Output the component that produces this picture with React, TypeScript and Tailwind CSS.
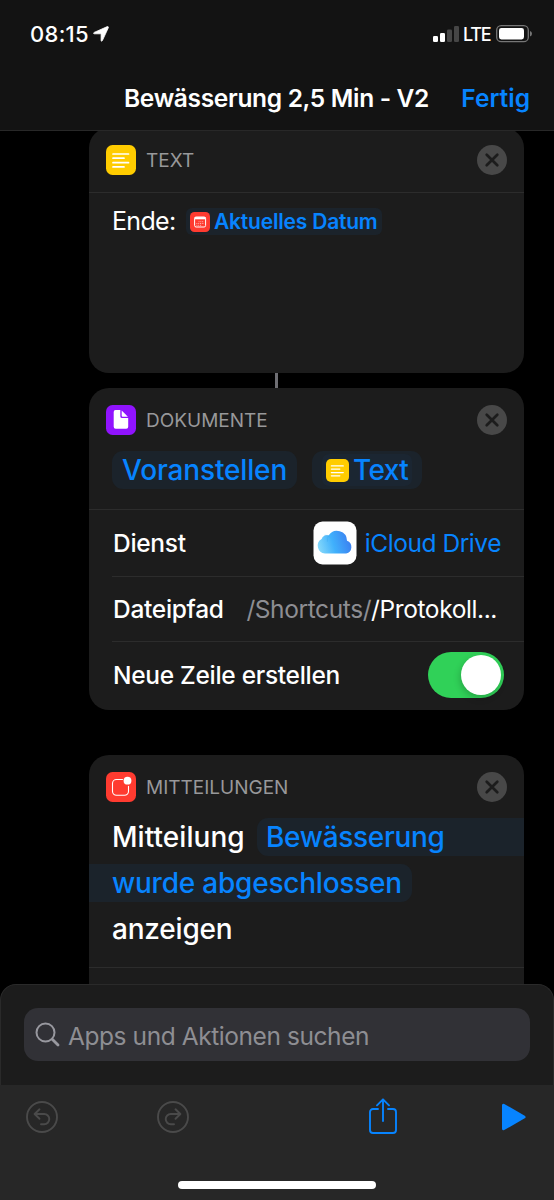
import type { ReactNode } from 'react';

function TextIcon({ size }: { size: number }) {
    return (
        <svg width={size} height={size} viewBox="0 0 30 30" className="shrink-0">
            <rect width="30" height="30" rx="6.5" fill="#ffcc00" />
            <path d="M7 9h15.500M7 13.200h11M7 17.700h15.500M7 21.900h11" stroke="#fff" strokeWidth="1.700" strokeLinecap="round" />
        </svg>
    );
}

function DocumentIcon() {
    return (
        <svg width="30" height="30" viewBox="0 0 30 30" className="shrink-0">
            <rect width="30" height="30" rx="6.500" fill="#9013fe" />
            <path d="M9.500 5h4.800v6.200q0 1.900 1.900 1.900h6V21.800q0 2-2 2H9.700q-2 0-2-2V7q0-2 1.800-2z" fill="#fff" />
            <path d="M15.700 5.400v5.300q0 1 1 1h5.200z" fill="#fff" />
        </svg>
    );
}

function NotificationIcon() {
    return (
        <svg width="30" height="30" viewBox="0 0 30 30" className="shrink-0">
            <rect width="30" height="30" rx="6.500" fill="#ff3b30" />
            <path d="M16.500 7.500H10.500a4 4 0 0 0-4 4v7.800a4 4 0 0 0 4 4h8a4 4 0 0 0 4-4V14.300" fill="none" stroke="#fff" strokeWidth="1.100" strokeLinecap="round" />
            <circle cx="21.500" cy="8.700" r="3.900" fill="#fff" />
        </svg>
    );
}

function CalendarIcon() {
    return (
        <svg width="20" height="20" viewBox="0 0 20 20" className="shrink-0">
            <rect width="20" height="20" rx="4.500" fill="#ff3b30" />
            <rect x="4.600" y="5" width="11" height="10" rx="1.500" fill="none" stroke="#fff" strokeWidth="1" />
            <path d="M4.600 6.200h11" stroke="#fff" strokeWidth="2.200" />
            <path d="M8.500 9.700h5.500M6.400 11.500h7.600M6.400 13.300h5.500" stroke="#ffb3ae" strokeWidth=".9" strokeDasharray="1 .8" />
        </svg>
    );
}

function CloudIcon() {
    return (
        <svg width="44" height="44" viewBox="0 0 44 44" className="shrink-0">
            <defs>
                <linearGradient id="cloud" x1="0" y1="0.600" x2="1" y2="0.400">
                    <stop offset="0" stopColor="#83d7fa" />
                    <stop offset="0.450" stopColor="#40b0fc" />
                    <stop offset="1" stopColor="#3b7df0" />
                </linearGradient>
            </defs>
            <rect x=".5" y=".5" width="43" height="43" rx="9" fill="#fff" />
            <path d="M12 32.500a7.800 7.800 0 0 1-3.400-14.500 5.700 5.700 0 0 1 7-3.600A10 10 0 0 1 34 19.700a6.700 6.700 0 0 1-.8 12.800z" fill="url(#cloud)" />
            <path d="M15.600 14.400a10 10 0 0 0-1.200 6.300M11.500 14.300a5.700 5.700 0 0 1 6 2.500" fill="none" stroke="#3aa9ef" strokeWidth=".7" opacity=".6" />
        </svg>
    );
}

function CloseButton() {
    return (
        <button type="button" aria-label="Entfernen" className="ml-auto shrink-0">
            <svg width="30" height="30" viewBox="0 0 30 30">
                <circle cx="15" cy="15" r="15" fill="#484848" />
                <path d="M9.700 9.700l10.600 10.600M20.300 9.700L9.700 20.300" stroke="#1c1c1c" strokeWidth="2.700" strokeLinecap="round" />
            </svg>
        </button>
    );
}

function CardHeader({ icon, children }: { icon: ReactNode; children: ReactNode }) {
    return (
        <div className="flex h-[47px] items-start pl-[17px] pr-[17px] pt-[17px]">
            {icon}
            <span className="ml-[10px] text-[19px] leading-[31px] text-[#98989a]">{children}</span>
            <CloseButton />
        </div>
    );
}

function StatusBar() {
    return (
        <div className="flex h-[66px] items-center pl-[30px] pr-[22px] pt-[2px]">
            <span className="text-[22px] font-medium tracking-[0.3px]">08:15</span>
            <svg width="16" height="16" viewBox="0 0 16 16" className="ml-[4px]">
                <path d="M14.300.6a.8.800 0 0 1 1.100 1L9.400 14.600c-.4.900-1.300.8-1.300-.2V8.300c0-.3-.2-.5-.5-.5H1.400c-1 0-1.100-1-.2-1.400z" fill="#fff" stroke="#fff" strokeWidth=".8" />
            </svg>
            <svg width="26" height="17" viewBox="0 0 26 17" className="ml-auto">
                <rect x="0" y="10" width="5" height="6" rx="1.300" fill="#fff" />
                <rect x="7" y="7" width="5" height="9" rx="1.300" fill="#fff" />
                <rect x="14" y="3.500" width="5" height="12.500" rx="1.300" fill="#464646" />
                <rect x="21" y="0" width="5" height="16" rx="1.300" fill="#464646" />
            </svg>
            <span className="ml-[4px] w-[28px] text-[18px] font-medium tracking-[-1.200px]">LTE</span>
            <svg width="36" height="18" viewBox="0 0 36 18" className="ml-[5px] shrink-0">
                <rect x=".7" y=".7" width="31.600" height="16" rx="4.500" fill="none" stroke="#767676" strokeWidth="1.300" />
                <rect x="3" y="3" width="25" height="11.500" rx="2.400" fill="#fff" />
                <path d="M34 6q2 .7 2 2.700T34 11.500z" fill="#767676" />
            </svg>
        </div>
    );
}

function TextCard() {
    return (
        <section className="-mt-[3px] h-[245px] rounded-[20px] bg-[#1c1c1c]">
            <CardHeader icon={<TextIcon size={30} />}>TEXT</CardHeader>
            <div className="mt-[17px] flex items-center border-t border-[#2c2c2c] pl-[23px] pt-[15px]">
                <span className="-mt-[2px] w-[64px] text-[25px] leading-[28px] tracking-[-0.700px]">Ende:</span>
                <span className="ml-[10px] flex h-[27px] items-center rounded-[6px] bg-[#1b232b] px-[4px]">
                    <CalendarIcon />
                    <span className="ml-[4px] text-[21px] font-semibold tracking-[-0.2px] text-[#0784ff]">Aktuelles Datum</span>
                </span>
            </div>
        </section>
    );
}

function DocumentCard() {
    return (
        <section className="h-[322px] rounded-[20px] bg-[#1c1c1c]">
            <CardHeader icon={<DocumentIcon />}>DOKUMENTE</CardHeader>
            <div className="mt-[16px] flex pb-[20px] pl-[23px] text-[28px] leading-[38px] text-[#0784ff]">
                <span className="w-[185px] rounded-[11px] bg-[#1b232b] pl-[10px] font-medium tracking-[-0.15px]">Voranstellen</span>
                <span className="ml-[15px] rounded-[11px] bg-[#1b232b] px-[10px] py-[3px]">
                    <span className="flex h-[32px] w-[90px] items-center rounded-[7px] bg-[#1b2632] pl-[4px]">
                        <TextIcon size={23} />
                        <span className="ml-[4px] font-medium tracking-[-0.6px]">Text</span>
                    </span>
                </span>
            </div>
            <div className="border-t border-[#2c2c2c] pl-[23px] text-[24.500px] font-medium">
                <div className="flex h-[66px] items-center">
                    <span className="pl-px tracking-[-0.3px]">Dienst</span>
                    <span className="ml-auto flex items-center pr-[23px] font-normal text-[#0784ff]">
                        <CloudIcon />
                        <span className="ml-[8px] tracking-[-0.45px]">iCloud Drive</span>
                    </span>
                </div>
                <div className="flex h-[65px] items-center border-t border-[#2c2c2c]">
                    <span className="pl-px tracking-[-0.300px]">Dateipfad</span>
                    <span className="ml-auto pr-[27px] font-normal whitespace-nowrap">
                        <span className="tracking-[-0.4px] text-[#8e8e93]">/Shortcuts/</span>
                        <span className="tracking-[-0.4px]">/Protokoll...</span>
                    </span>
                </div>
                <div className="flex h-[67px] items-center border-t border-[#2c2c2c] pr-[20px]">
                    <span className="pl-px tracking-[-0.3px]">Neue Zeile erstellen</span>
                    <span className="ml-auto flex h-[46px] w-[76px] items-center justify-end rounded-full bg-[#30d158] pr-[3px]">
                        <span className="size-[40px] rounded-full bg-white shadow-[-1px_3px_7px_rgba(0,0,0,0.2)]" />
                    </span>
                </div>
            </div>
        </section>
    );
}

function NotificationCard() {
    return (
        <section className="mt-[45px] h-[260px] rounded-t-[20px] bg-[#1c1c1c]">
            <CardHeader icon={<NotificationIcon />}>MITTEILUNGEN</CardHeader>
            <div className="mt-[16px] text-[28px] leading-[38px] font-medium">
                <div className="flex">
                    <span className="w-[168px] pl-[23px] tracking-[0.05px]">Mitteilung</span>
                    <span className="grow rounded-l-[11px] bg-[#1b232b] pl-[9px] tracking-[-0.3px] text-[#0784ff]">Bewässerung</span>
                </div>
                <div className="mt-[8px] flex">
                    <span className="w-[323px] rounded-r-[11px] bg-[#1b232b] pl-[23px] tracking-[-0.22px] text-[#0784ff]">wurde abgeschlossen</span>
                </div>
                <div className="mt-[8px] pl-[23px] tracking-[-0.2px]">anzeigen</div>
            </div>
            <div className="mt-[19px] border-t border-[#2c2c2c]" />
        </section>
    );
}

function SearchPanel() {
    return (
        <div className="h-[101px] rounded-t-[16px] border-x border-t border-[#2a2a2a] bg-[#1c1c1c] px-[23px] pt-[23px]">
            <div className="flex h-[53px] items-center rounded-[14px] bg-[#313136] pl-[11px]">
                <svg width="26" height="26" viewBox="0 0 26 26" fill="none" stroke="#98989f" strokeWidth="2" strokeLinecap="round">
                    <circle cx="10.500" cy="10.500" r="9" />
                    <path d="M17.500 17.500l5.500 5.500" strokeWidth="2.800" />
                </svg>
                <span className="ml-[7px] pt-[3px] text-[24.500px] tracking-[-0.43px] text-[#8e8e93]">Apps und Aktionen suchen</span>
            </div>
        </div>
    );
}

function UndoIcon({ className }: { className?: string }) {
    return (
        <svg width="32" height="32" viewBox="0 0 32 32" fill="none" stroke="#4a4a4a" strokeWidth="1.900" strokeLinecap="round" strokeLinejoin="round" className={className}>
            <circle cx="16" cy="16" r="15" />
            <path d="M13.500 8.300L8.600 13l4.900 4.800M9 13h9.200a5.100 5.100 0 0 1 0 10.200H15" />
        </svg>
    );
}

function Toolbar() {
    return (
        <div className="h-[115px] bg-[#272727]">
            <div className="flex h-[64px] items-center pl-[26px] pr-[28px]">
                <UndoIcon />
                <UndoIcon className="ml-[99px] -scale-x-100" />
                <svg width="28" height="36" viewBox="0 0 28 36" fill="none" stroke="#0784ff" strokeWidth="1.900" strokeLinecap="round" strokeLinejoin="round" className="ml-[180px] -mt-[2px]">
                    <path d="M9 11H4a3 3 0 0 0-3 3v18a3 3 0 0 0 3 3h20a3 3 0 0 0 3-3V14a3 3 0 0 0-3-3h-5" />
                    <path d="M14 23V1.500M8 7.300l6-6 6 6" />
                </svg>
                <svg width="25" height="28" viewBox="0 0 25 28" className="ml-auto">
                    <path d="M2.500 2.200v23.600L23 14z" fill="#0784ff" stroke="#0784ff" strokeWidth="3" strokeLinejoin="round" />
                </svg>
            </div>
            <div className="mx-auto mt-[32px] h-[8px] w-[198px] rounded-full bg-white" />
        </div>
    );
}

export default function App() {
    return (
        <div className="flex h-[1200px] w-[554px] flex-col overflow-hidden bg-black font-['Inter','Liberation_Sans',sans-serif] text-white">
            <header className="z-10 h-[131px] shrink-0 border-b border-[#282828] bg-[#131313]">
                <StatusBar />
                <div className="flex items-center pl-[124px] pr-[24px] pt-[14px] text-[24.500px] leading-[36px] font-semibold whitespace-nowrap">
                    <h1 className="tracking-[-0.32px]">Bewässerung 2,5 Min - V2</h1>
                    <button type="button" className="ml-auto text-[#0784ff]">Fertig</button>
                </div>
            </header>
            <main className="h-[853px] shrink-0 pl-[89px] pr-[30px]">
                <TextCard />
                <div className="ml-[186px] h-[15px] w-[3px] bg-[#6e6e73]" />
                <DocumentCard />
                <NotificationCard />
            </main>
            <footer className="z-10 shrink-0">
                <SearchPanel />
                <Toolbar />
            </footer>
        </div>
    );
}
